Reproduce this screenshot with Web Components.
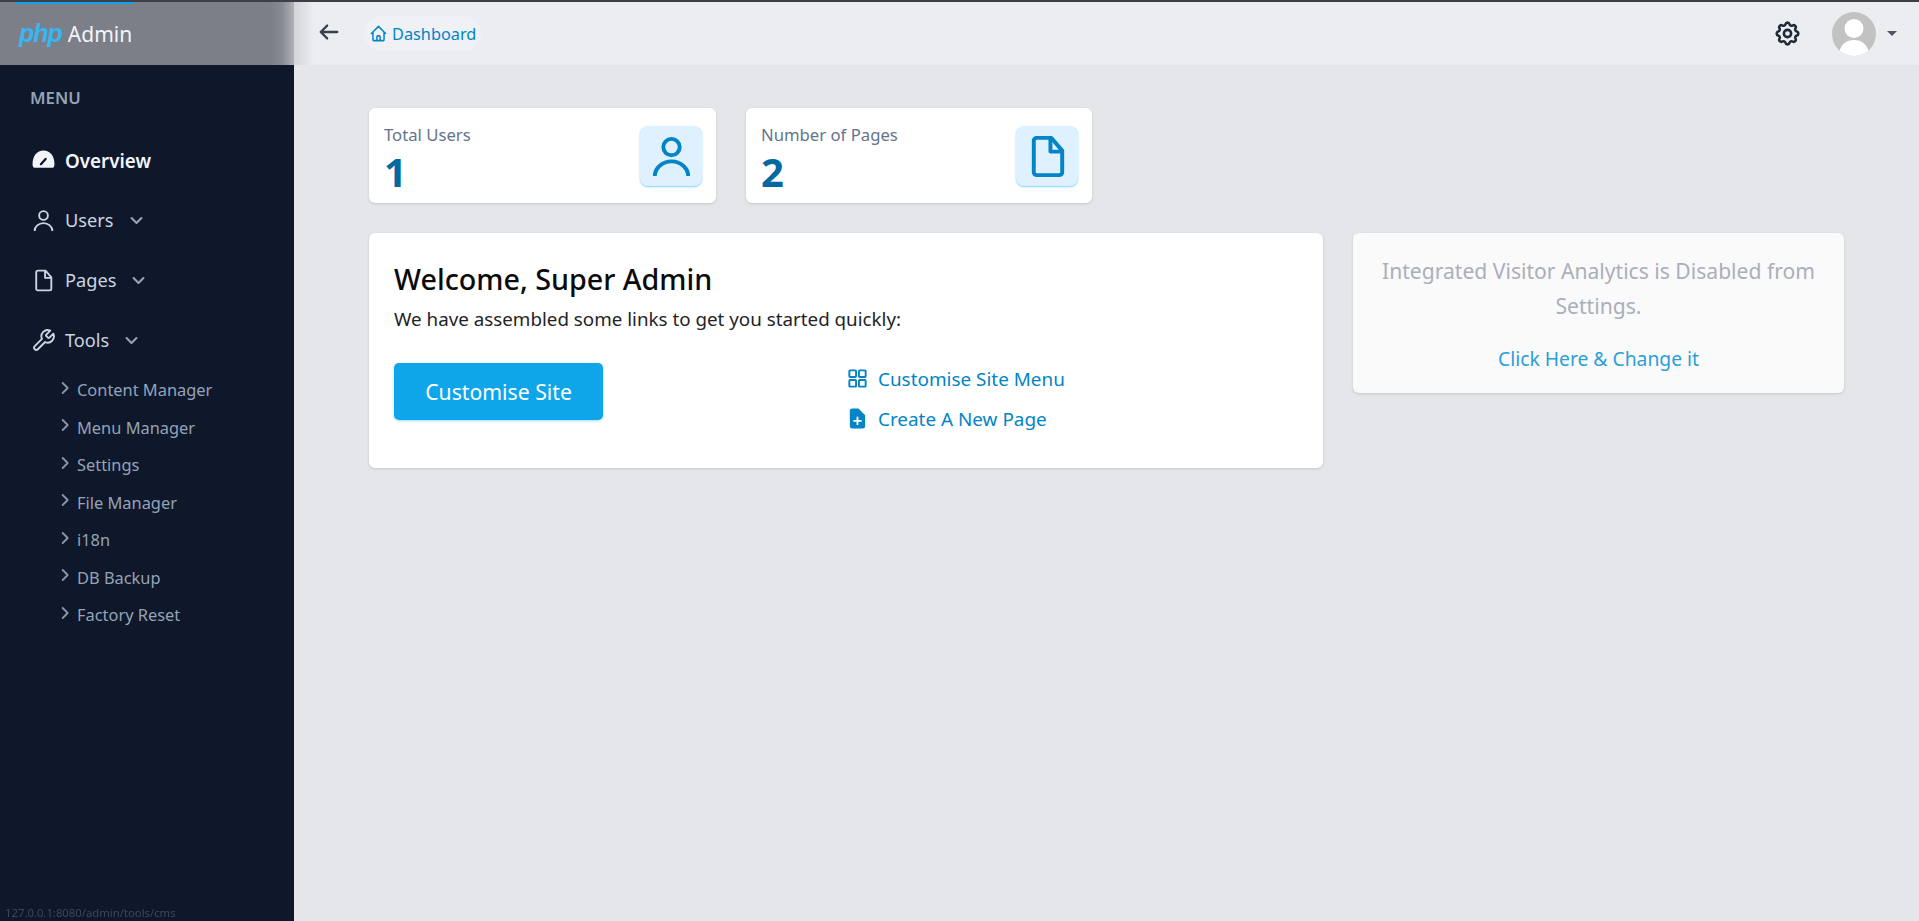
<!DOCTYPE html>
<html lang="en">
<head>
<meta charset="utf-8">
<title>Admin</title>
<style>
  html, body { margin: 0; height: 100%; overflow: hidden; }
  body { font-family: "Noto Sans", "Open Sans", sans-serif; background: #e4e6ea; }
</style>
</head>
<body>
<admin-shell>
  <side-bar slot="side">
    <nav-item icon="gauge" current>Overview</nav-item>
    <nav-item icon="user" caret>Users</nav-item>
    <nav-item icon="file" caret>Pages</nav-item>
    <nav-item icon="wrench" caret open>Tools</nav-item>
    <sub-item>Content Manager</sub-item>
    <sub-item>Menu Manager</sub-item>
    <sub-item>Settings</sub-item>
    <sub-item>File Manager</sub-item>
    <sub-item>i18n</sub-item>
    <sub-item>DB Backup</sub-item>
    <sub-item>Factory Reset</sub-item>
  </side-bar>
  <top-bar slot="top"></top-bar>
  <stat-card label="Total Users" value="1" icon="user"></stat-card>
  <stat-card label="Number of Pages" value="2" icon="file"></stat-card>
  <welcome-panel slot="wide"></welcome-panel>
  <analytics-panel slot="narrow"></analytics-panel>
</admin-shell>
<link-hint>127.0.0.1:8080/admin/tools/cms</link-hint>

<script>
const ICONS = {
  user: '<circle cx="12" cy="7.2" r="4.200" fill="none"/><path d="M3.500 22a8.500 7.500 0 0 1 17 0" fill="none" stroke-linecap="butt"/>',
  file: '<path d="M6.5 2.5h7.5l5.5 6.5v11a1.5 1.5 0 0 1-1.5 1.5H6.5A1.5 1.5 0 0 1 5 20V4a1.500 1.500 0 0 1 1.500-1.500z" fill="none"/><path d="M13.500 3v6.500H19" fill="none"/>',
  wrench: '<path fill="none" d="M14.7 6.3a1 1 0 0 0 0 1.4l1.600 1.600a1 1 0 0 0 1.400 0l3.770-3.770a6 6 0 0 1-7.940 7.940l-6.910 6.910a2.120 2.120 0 0 1-3-3l6.910-6.910a6 6 0 0 1 7.940-7.940l-3.760 3.760z"/>',
  gauge: '<path stroke="none" fill="currentColor" d="M12 2.500C5.700 2.500 1.500 7.800 1.500 15.500c0 2.200.8 3.500 2.500 3.500h16c1.700 0 2.500-1.300 2.500-3.500C22.500 7.800 18.300 2.500 12 2.500z"/><path d="M9.500 15.500l4.500-5" fill="none" stroke="#0f172a" stroke-width="2.200" stroke-linecap="round"/>',
  chevronDown: '<path fill="none" d="M5 8.500l7 7 7-7"/>',
  chevronRight: '<path fill="none" d="M8.500 4.500l7.500 7.500-7.500 7.500"/>',
  arrow: '<path fill="none" d="M10 5l-7 7 7 7M3 12h18"/>',
  home: '<path fill="none" d="M3 12l2-2m0 0l7-7 7 7M5 10v10a1 1 0 001 1h3m10-11l2 2m-2-2v10a1 1 0 01-1 1h-3m-6 0a1 1 0 001-1v-4a1 1 0 011-1h2a1 1 0 011 1v4a1 1 0 001 1m-6 0h6"/>',
  cog: '<path fill="none" d="M10.325 4.317c.426-1.756 2.924-1.756 3.350 0a1.724 1.724 0 002.573 1.066c1.543-.94 3.310.826 2.370 2.370a1.724 1.724 0 001.065 2.572c1.756.426 1.756 2.924 0 3.350a1.724 1.724 0 00-1.066 2.573c.94 1.543-.826 3.310-2.370 2.370a1.724 1.724 0 00-2.572 1.065c-.426 1.756-2.924 1.756-3.350 0a1.724 1.724 0 00-2.573-1.066c-1.543.94-3.310-.826-2.370-2.370a1.724 1.724 0 00-1.065-2.572c-1.756-.426-1.756-2.924 0-3.350a1.724 1.724 0 001.066-2.573c-.94-1.543.826-3.310 2.370-2.370.996.608 2.296.07 2.572-1.065z"/><path fill="none" d="M15 12a3 3 0 11-6 0 3 3 0 016 0z"/>',
  grid: '<rect x="3.500" y="3.500" width="7" height="7" rx=".8" fill="none"/><rect x="13.500" y="3.500" width="7" height="7" rx=".8" fill="none"/><rect x="3.500" y="13.500" width="7" height="7" rx=".8" fill="none"/><rect x="13.500" y="13.500" width="7" height="7" rx=".8" fill="none"/>',
  fileAdd: '<path stroke="none" fill="currentColor" fill-rule="evenodd" d="M6.500 1.500A2.500 2.500 0 0 0 4 4v16a2.500 2.500 0 0 0 2.500 2.500h11A2.500 2.500 0 0 0 20 20V8.500l-7-7H6.500zM13 11a1 1 0 1 0-2 0v2.500H8.500a1 1 0 1 0 0 2H11V18a1 1 0 1 0 2 0v-2.500h2.500a1 1 0 1 0 0-2H13V11z"/>'
};

class UiIcon extends HTMLElement {
  connectedCallback() {
    const name = this.getAttribute('name');
    const width = this.getAttribute('stroke') || 2;
    this.attachShadow({ mode: 'open' });
    this.shadowRoot.innerHTML = `
    <style>
    :host { display: inline-flex; flex: none; }
    svg { width: 100%; height: 100%; display: block; }
    </style>
    <svg viewBox="0 0 24 24" stroke="currentColor" stroke-width="${width}" stroke-linecap="round" stroke-linejoin="round">${ICONS[name]}</svg>
    `;
  }
}

class AdminShell extends HTMLElement {
  constructor() {
    super();
    this.attachShadow({ mode: 'open' });
    this.shadowRoot.innerHTML = `
    <style>
    :host {
      display: grid;
      grid-template-columns: 294px 1fr;
      grid-template-rows: 63px 1fr;
      height: 919px;
      border-top: 2px solid #3c3e48;
    }
    .side { grid-row: 1 / 3; display: flex; }
    .main {
      display: flex;
      flex-direction: column;
      gap: 30px;
      padding: 43px 75px 0;
      min-width: 0;
    }
    .stats { display: grid; grid-template-columns: 347px 346px; gap: 30px; }
    .panels { display: grid; grid-template-columns: 954px 491px; gap: 30px; align-items: start; }
    </style>
    <div class="side"><slot name="side"></slot></div>
    <slot name="top"></slot>
    <div class="main">
      <div class="stats"><slot></slot></div>
      <div class="panels"><slot name="wide"></slot><slot name="narrow"></slot></div>
    </div>
    `;
  }
}

class SideBar extends HTMLElement {
  constructor() {
    super();
    this.attachShadow({ mode: 'open' });
    this.shadowRoot.innerHTML = `
    <style>
    :host {
      display: flex;
      flex-direction: column;
      width: 294px;
      background: #0f172a;
    }
    .logo {
      position: relative;
      display: flex;
      align-items: center;
      gap: 6px;
      height: 63px;
      padding-left: 19px;
      background: linear-gradient(to right, #7c7f88 270px, #888b93 282px, #b1b3b9 294px);
    }
    .logo::before {
      content: '';
      position: absolute;
      left: 15px;
      top: 0;
      width: 118px;
      height: 2px;
      background: #0ea5e9;
    }
    .php {
      font: italic 700 25px/1 "Liberation Sans", sans-serif;
      letter-spacing: -1px;
      color: #38b6f1;
      margin-top: -1px;
    }
    .name { font-size: 21px; color: #f1f5f9; }
    .label {
      padding: 22px 0 0 30px;
      height: 66px;
      box-sizing: border-box;
      line-height: 22px;
      font-size: 16.800px;
      font-weight: 600;
      color: #94a3b8;
    }
    </style>
    <div class="logo"><span class="php">php</span><span class="name">Admin</span></div>
    <div class="label">MENU</div>
    <slot></slot>
    `;
  }
}

class NavItem extends HTMLElement {
  constructor() {
    super();
    this.attachShadow({ mode: 'open' });
    const caret = this.hasAttribute('caret');
    this.shadowRoot.innerHTML = `
    <style>
    :host {
      display: flex;
      align-items: center;
      height: 60px;
      padding-left: 31px;
      font-size: 18.2px;
      color: #cbd5e1;
    }
    :host([current]) { color: #f1f5f9; font-weight: 600; font-size: 18.8px; height: 59px; }
    :host([open]) { margin-bottom: 1px; }
    ui-icon { width: 25px; height: 25px; }
    .text { margin-left: 9px; }
    .caret { width: 17px; height: 17px; margin-left: 14px; color: #94a3b8; }
    </style>
    <ui-icon name="${this.getAttribute('icon')}" stroke="1.8"></ui-icon>
    <span class="text"><slot></slot></span>
    ${caret ? '<ui-icon class="caret" name="chevronDown" stroke="3"></ui-icon>' : ''}
    `;
  }
}

class SubItem extends HTMLElement {
  constructor() {
    super();
    this.attachShadow({ mode: 'open' });
    this.shadowRoot.innerHTML = `
    <style>
    :host {
      display: flex;
      align-items: center;
      height: 37.5px;
      padding-left: 57px;
      font-size: 16.4px;
      color: #94a3b8;
    }
    ui-icon { width: 16px; height: 16px; margin: -4px 4px 0 0; color: #8a95a8; }
    </style>
    <ui-icon name="chevronRight" stroke="2.800"></ui-icon>
    <slot></slot>
    `;
  }
}

class TopBar extends HTMLElement {
  constructor() {
    super();
    this.attachShadow({ mode: 'open' });
    this.shadowRoot.innerHTML = `
    <style>
    :host {
      display: flex;
      align-items: center;
      height: 63px;
      padding-left: 24px;
      background: linear-gradient(to right, #d3d5d9, #ebedf1 20px);
      color: #374151;
    }
    .back { width: 22px; height: 22px; margin-top: -4px; }
    .crumb {
      display: flex;
      align-items: center;
      gap: 4px;
      height: 35px;
      margin-left: 24px;
      padding: 0 5px 0 5px;
      border-radius: 18px;
      background: #eff1f4;
      color: #0284c7;
      font-size: 16.3px;
    }
    .crumb ui-icon { width: 19px; height: 19px; }
    .gear { width: 29px; height: 29px; margin-left: auto; color: #1f2937; }
    .avatar {
      width: 44px;
      height: 44px;
      margin-left: 30px;
      border-radius: 50%;
      overflow: hidden;
      background: #c2c2c2;
    }
    .avatar svg { display: block; width: 100%; height: 100%; }
    .caret {
      width: 0;
      height: 0;
      margin: 0 22px 0 11px;
      border: 5px solid transparent;
      border-top: 5px solid #4b5563;
      border-bottom: 0;
    }
    </style>
    <ui-icon class="back" name="arrow" stroke="2.500"></ui-icon>
    <div class="crumb"><ui-icon name="home" stroke="1.900"></ui-icon>Dashboard</div>
    <ui-icon class="gear" name="cog" stroke="2.100"></ui-icon>
    <div class="avatar">
      <svg viewBox="0 0 44 44"><circle cx="22" cy="16.500" r="9.500" fill="#fff"/><path d="M7 44c0-10 6-16 15-16s15 6 15 16z" fill="#fff"/></svg>
    </div>
    <div class="caret"></div>
    `;
  }
}

class StatCard extends HTMLElement {
  constructor() {
    super();
    this.attachShadow({ mode: 'open' });
    this.shadowRoot.innerHTML = `
    <style>
    :host {
      display: flex;
      justify-content: space-between;
      align-items: center;
      box-sizing: border-box;
      height: 95px;
      padding: 0 14px 0 15px;
      background: #fff;
      border-radius: 6px;
      box-shadow: 0 1px 3px rgba(0, 0, 0, .14);
    }
    .text { align-self: flex-start; padding-top: 16px; }
    .label { font-size: 16.7px; line-height: 22px; color: #64748b; }
    .value { font-size: 40px; font-weight: 700; line-height: 52px; color: #0369a1; }
    .icon {
      display: flex;
      align-items: center;
      justify-content: center;
      width: 62px;
      height: 60px;
      margin-top: 1px;
      border-radius: 8px;
      background: #dff0fe;
      color: #0284c7;
      box-shadow: 0 1px 2px #7dd3fc;
    }
    ui-icon { width: 47px; height: 47px; }
    </style>
    <div class="text">
      <div class="label">${this.getAttribute('label')}</div>
      <div class="value">${this.getAttribute('value')}</div>
    </div>
    <div class="icon"><ui-icon name="${this.getAttribute('icon')}" stroke="2"></ui-icon></div>
    `;
  }
}

class WelcomePanel extends HTMLElement {
  constructor() {
    super();
    this.attachShadow({ mode: 'open' });
    this.shadowRoot.innerHTML = `
    <style>
    :host {
      display: block;
      box-sizing: border-box;
      height: 235px;
      padding: 22px 25px 0;
      background: #fff;
      border-radius: 6px;
      box-shadow: 0 1px 3px rgba(0, 0, 0, .14);
    }
    h2 { margin: 0; font-size: 28.700px; font-weight: 500; line-height: 48px; color: #0b0b0b; }
    p { margin: 1px 0 0; font-size: 18.800px; line-height: 30px; color: #1f2328; }
    .row { display: flex; margin-top: 29px; }
    .btn {
      display: flex;
      align-items: center;
      justify-content: center;
      flex: none;
      width: 209px;
      height: 57px;
      border-radius: 5px;
      background: #0ea5e9;
      color: #fff;
      font-size: 21.200px;
      box-shadow: 0 1px 3px rgba(14, 165, 233, .4);
    }
    .links { margin: -4px 0 0 243px; }
    .link {
      display: flex;
      align-items: center;
      height: 40px;
      font-size: 18.900px;
      color: #0284c7;
    }
    ui-icon { width: 23px; height: 23px; margin: -2px 9px 0 0; }
    </style>
    <h2>Welcome, Super Admin</h2>
    <p>We have assembled some links to get you started quickly:</p>
    <div class="row">
      <div class="btn">Customise Site</div>
      <div class="links">
        <div class="link"><ui-icon name="grid" stroke="2"></ui-icon>Customise Site Menu</div>
        <div class="link"><ui-icon name="fileAdd"></ui-icon>Create A New Page</div>
      </div>
    </div>
    `;
  }
}

class AnalyticsPanel extends HTMLElement {
  constructor() {
    super();
    this.attachShadow({ mode: 'open' });
    this.shadowRoot.innerHTML = `
    <style>
    :host {
      display: block;
      box-sizing: border-box;
      height: 160px;
      padding: 20px 24px 0;
      background: #fafafa;
      border-radius: 6px;
      box-shadow: 0 1px 3px rgba(0, 0, 0, .14);
      text-align: center;
    }
    p { margin: 0; font-size: 21.100px; line-height: 35px; color: #a9afbb; }
    a { display: block; margin-top: 22px; font-size: 19.300px; line-height: 28px; color: #2a9fd8; }
    </style>
    <p>Integrated Visitor Analytics is Disabled from Settings.</p>
    <a>Click Here &amp; Change it</a>
    `;
  }
}

class LinkHint extends HTMLElement {
  constructor() {
    super();
    this.attachShadow({ mode: 'open' });
    this.shadowRoot.innerHTML = `
    <style>
    :host {
      position: fixed;
      left: 5px;
      bottom: 1px;
      font-size: 11.300px;
      line-height: 14px;
      color: #3e4757;
    }
    </style>
    <slot></slot>
    `;
  }
}

customElements.define('ui-icon', UiIcon);
customElements.define('admin-shell', AdminShell);
customElements.define('side-bar', SideBar);
customElements.define('nav-item', NavItem);
customElements.define('sub-item', SubItem);
customElements.define('top-bar', TopBar);
customElements.define('stat-card', StatCard);
customElements.define('welcome-panel', WelcomePanel);
customElements.define('analytics-panel', AnalyticsPanel);
customElements.define('link-hint', LinkHint);
</script>
</body>
</html>
